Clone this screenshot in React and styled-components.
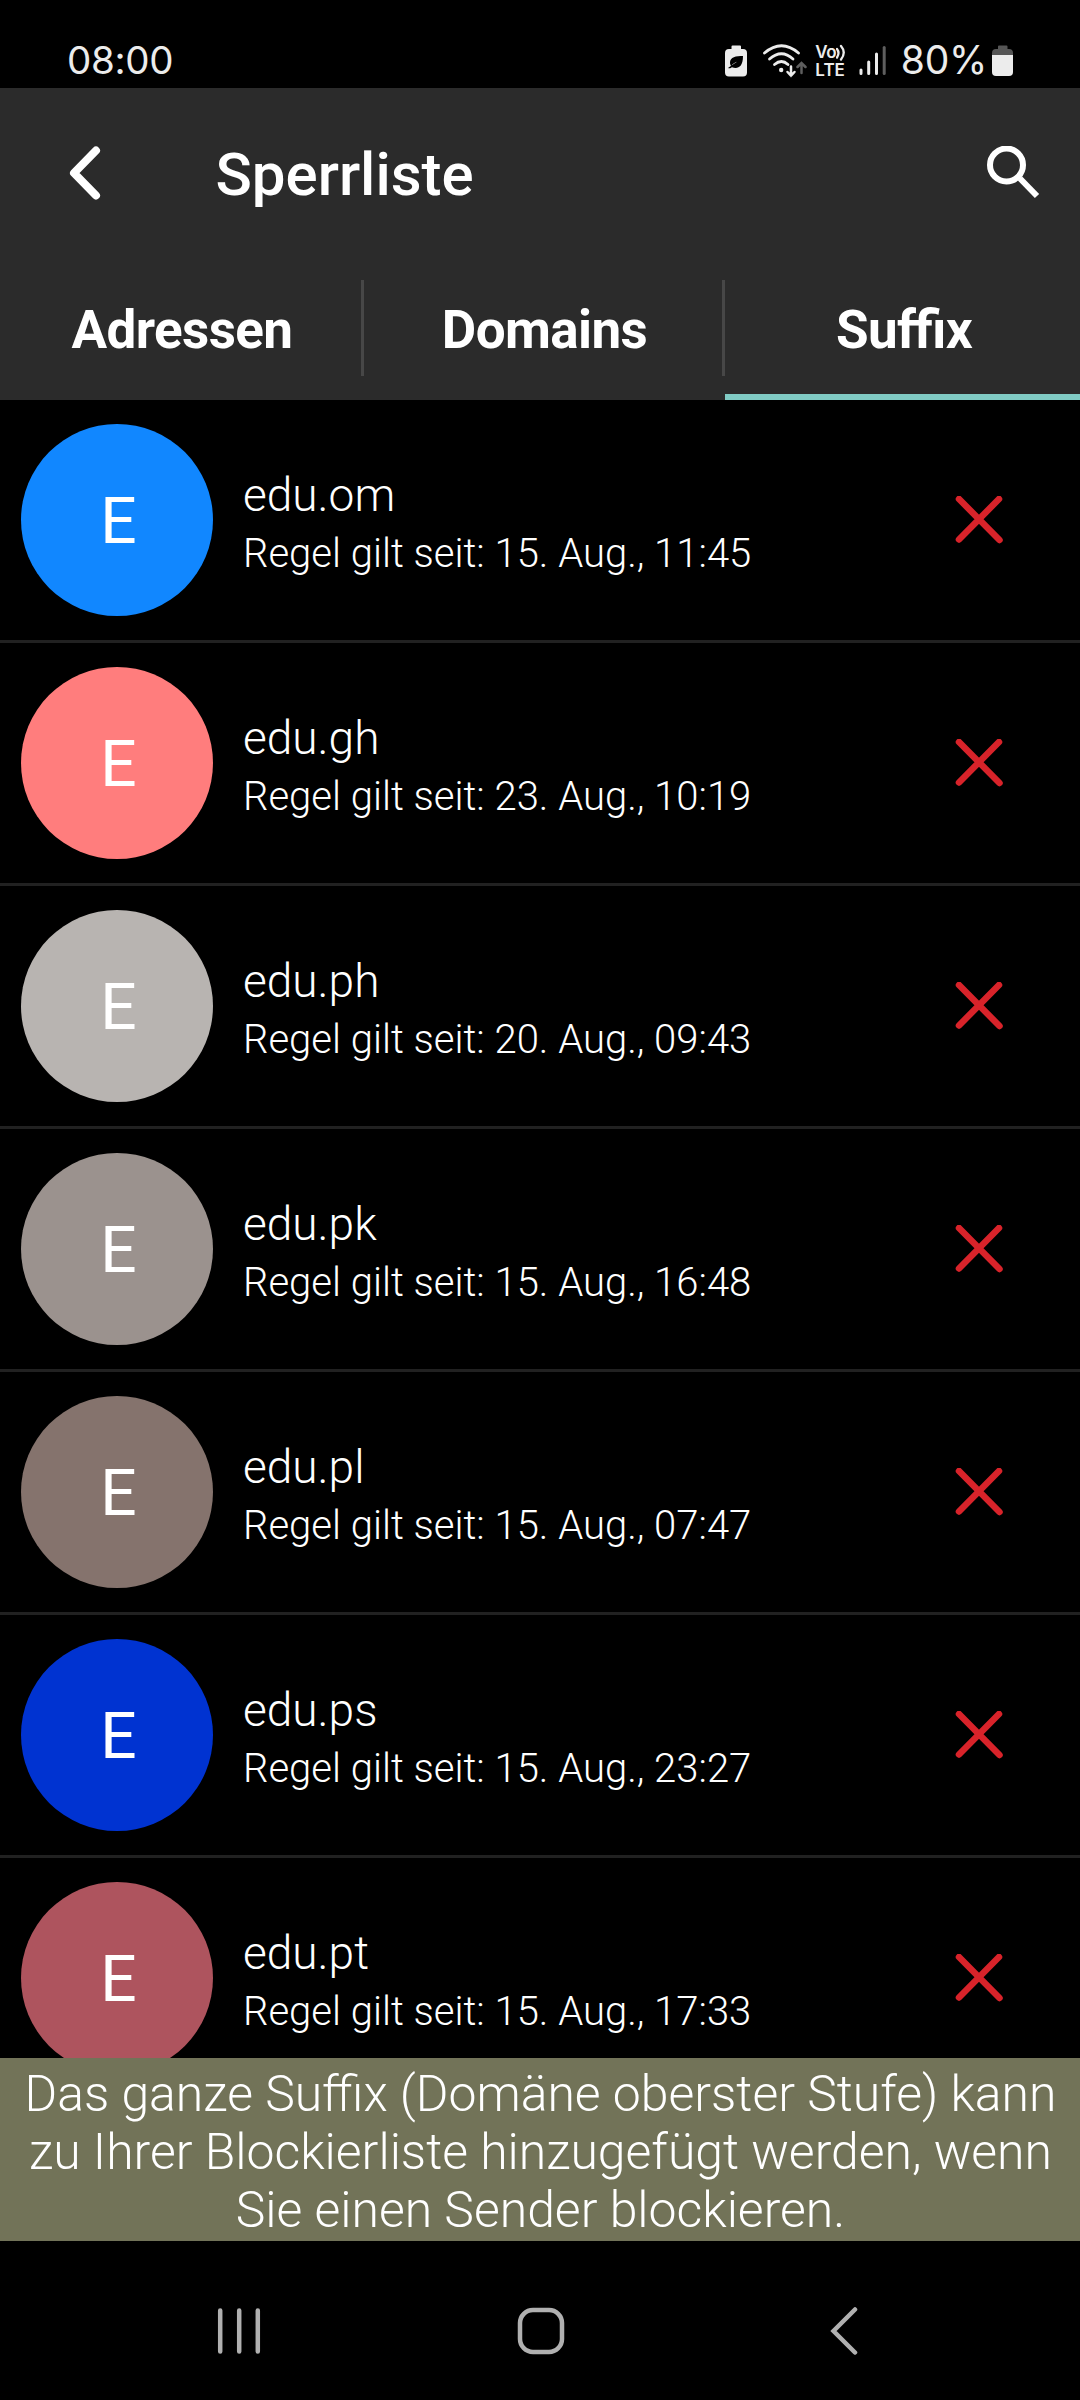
import React from 'react';
import styled, { createGlobalStyle } from 'styled-components';

const rules = [
  { name: 'edu.om', since: '15. Aug., 11:45', color: '#1187ff' },
  { name: 'edu.gh', since: '23. Aug., 10:19', color: '#ff7d7d' },
  { name: 'edu.ph', since: '20. Aug., 09:43', color: '#b8b4b1' },
  { name: 'edu.pk', since: '15. Aug., 16:48', color: '#9b928e' },
  { name: 'edu.pl', since: '15. Aug., 07:47', color: '#85736d' },
  { name: 'edu.ps', since: '15. Aug., 23:27', color: '#0033d1' },
  { name: 'edu.pt', since: '15. Aug., 17:33', color: '#ae545e' },
];

const GlobalStyle = createGlobalStyle`
  * {
    box-sizing: border-box;
  }
  body {
    margin: 0;
    background: #000;
  }
  svg {
    display: block;
    flex: none;
  }
`;

const Screen = styled.div`
  width: 1080px;
  height: 2400px;
  display: flex;
  flex-direction: column;
  overflow: hidden;
  background: #000;
  color: #fff;
  font-family: Roboto, 'Liberation Sans', sans-serif;
`;

const StatusBar = styled.div`
  flex: none;
  height: 88px;
  padding: 40px 67px 0 67px;
  display: flex;
  justify-content: space-between;
  color: #ececec;
  font-family: Inter, 'Liberation Sans', sans-serif;
`;

const Clock = styled.span`
  font-size: 38.5px;
  line-height: 40px;
  letter-spacing: -0.3px;
`;

const BatteryLevel = styled.span`
  margin-right: 5px;
  font-size: 39px;
  line-height: 40px;
  letter-spacing: -0.3px;
`;

const StatusIcons = styled.div`
  display: flex;
  height: 40px;
`;

const StatusIcon = styled.svg`
  height: 40px;
  margin-right: ${({ $gap }) => $gap}px;
`;

const VoLte = styled.div`
  width: 32px;
  margin-right: 11.5px;
  padding-top: 4px;
  font-size: 17px;
  font-weight: 600;
  line-height: 17.5px;
`;

const VoLine = styled.div`
  display: flex;
  letter-spacing: -0.5px;
`;

const Header = styled.header`
  flex: none;
  height: 312px;
  background: #2b2b2b;
`;

const Toolbar = styled.div`
  height: 192px;
  padding: 0 40px 22px 68px;
  display: flex;
  align-items: center;
`;

const Title = styled.h1`
  flex: 1;
  margin: 4px 0 0 113.5px;
  font-size: 60px;
  font-weight: 500;
  line-height: 70px;
`;

const Tabs = styled.nav`
  height: 120px;
  display: grid;
  grid-template-columns: 364px 361px 355px;
`;

const Tab = styled.div`
  display: flex;
  flex-direction: column;
  border-bottom: 6px solid ${({ $active }) => ($active ? '#80cbc4' : 'transparent')};
`;

const TabLabel = styled.div`
  height: 96px;
  padding-left: 3px;
  border-right: ${({ $divider }) => ($divider ? '3px solid #474747' : 'none')};
  font-size: 53px;
  font-weight: 700;
  font-feature-settings: 'liga';
  letter-spacing: -0.6px;
  line-height: 100px;
  text-align: center;
`;

const List = styled.ul`
  flex: 1;
  min-height: 0;
  margin: 0;
  padding: 0;
  overflow: hidden;
  list-style: none;
`;

const Row = styled.li`
  height: 243px;
  padding: 0 77px 0 21px;
  display: flex;
  align-items: center;
  border-bottom: 3px solid #212121;
`;

const Avatar = styled.div`
  flex: none;
  width: 192px;
  height: 192px;
  padding-left: 3px;
  border-radius: 50%;
  background: ${({ $color }) => $color};
  font-size: 64px;
  line-height: 195px;
  text-align: center;
`;

const RowText = styled.div`
  flex: 1;
  margin: 8px 0 0 30px;
  font-weight: 300;
`;

const Name = styled.div`
  font-size: 46px;
  line-height: 59px;
`;

const Since = styled.div`
  font-size: 40px;
  line-height: 58px;
`;

const Hint = styled.p`
  flex: none;
  height: 183px;
  margin: 0;
  padding: 7px 0 0 1px;
  background: #727358;
  font-size: 49.9px;
  font-weight: 300;
  line-height: 58px;
  text-align: center;
`;

const NavBar = styled.footer`
  flex: none;
  height: 159px;
  padding: 21px 222px 0 217px;
  display: flex;
  align-items: center;
  justify-content: space-between;
`;

const HomeIcon = styled.svg`
  margin-right: 9px;
`;

const BatterySaverIcon = () => (
  <StatusIcon width="22" viewBox="725 40 22 40" $gap={14}>
    <path
      d="M732.5 45.5h7.500a1 1 0 0 1 1 1V49h2a4 4 0 0 1 4 4v19.500a4 4 0 0 1-4 4h-14a4 4 0 0 1-4-4V53a4 4 0 0 1 4-4h2.500v-2.500a1 1 0 0 1 1-1z"
      fill="#ececec"
    />
    <path
      d="M743 56c-7 0-13 1-13 6.500 0 1.500.5 2.800 1 3.500 2-2.500 4-3.500 6-4.200-3 2-6 4.200-9 6.200 2 .5 3-.2 4-.8 5 1.800 11 .8 11-11.200z"
      fill="#000"
    />
  </StatusIcon>
);

const WifiIcon = () => (
  <StatusIcon width="46" viewBox="761 40 46 40" $gap={8} fill="none" strokeLinecap="round">
    <g stroke="#ececec" strokeWidth="2.8">
      <path d="M764.5 53q17-14.500 34 0" />
      <path d="M769.5 59q12-10.500 23.500 0" />
      <path d="M774.5 64.500q7-6 13.500 0" />
      <path d="M791 66.500v9M787.500 72l3.500 3.700 3.500-3.700" strokeWidth="2.5" />
    </g>
    <circle cx="781.2" cy="70" r="2.2" fill="#ececec" />
    <path d="M801.5 73V63.500M797.500 67l4-4 4 4" stroke="#5e5e5e" strokeWidth="2.5" />
  </StatusIcon>
);

const WavesIcon = () => (
  <svg width="11" height="17" viewBox="0 0 11 17" fill="none" stroke="#ececec" strokeWidth="2.3" strokeLinecap="round">
    <path d="M1 5q3 4 0 8.500M5 2q5.500 6.500 0 13.500" />
  </svg>
);

const SignalIcon = () => (
  <StatusIcon width="28" viewBox="859 40 28 40" $gap={14} strokeWidth="3" strokeLinecap="round" stroke="#ececec">
    <path d="M861 70v3.500M868.700 62v11.500M876.500 54v19.500" />
    <path d="M884.2 47.500v26" stroke="#5e5e5e" />
  </StatusIcon>
);

const BatteryIcon = () => (
  <StatusIcon width="21" viewBox="992 40 21 40" $gap={0}>
    <path d="M992 55v-2a4 4 0 0 1 4-4h2v-2.500a1 1 0 0 1 1-1h7.500a1 1 0 0 1 1 1V49h1.500a4 4 0 0 1 4 4v2z" fill="#555" />
    <path d="M992 55h21v17a4 4 0 0 1-4 4h-13a4 4 0 0 1-4-4z" fill="#ececec" />
  </StatusIcon>
);

const BackIcon = () => (
  <svg
    width="34"
    height="56"
    viewBox="0 0 34 56"
    fill="none"
    stroke="#fff"
    strokeWidth="8"
    strokeLinecap="round"
    strokeLinejoin="round"
  >
    <path d="M28 5.500L6 28l22 22.500" />
  </svg>
);

const SearchIcon = () => (
  <svg width="54" height="54" viewBox="0 2 54 54" fill="none" stroke="#fff">
    <circle cx="20.5" cy="21" r="16.5" strokeWidth="6" />
    <path d="M34 34.500L51 52" strokeWidth="6" />
    <path d="M32 32l3 3" strokeWidth="3" />
  </svg>
);

const DeleteIcon = () => (
  <svg width="48" height="48" viewBox="0 1 48 48" fill="none" stroke="#d8232a" strokeWidth="6.5" strokeLinecap="round">
    <path d="M4 4l40.500 41M44 4L4 44.500" />
  </svg>
);

const App = () => {
  return (
    <Screen>
      <GlobalStyle />
      <StatusBar>
        <Clock>08:00</Clock>
        <StatusIcons>
          <BatterySaverIcon />
          <WifiIcon />
          <VoLte>
            <VoLine>
              Vo
              <WavesIcon />
            </VoLine>
            <div>LTE</div>
          </VoLte>
          <SignalIcon />
          <BatteryLevel>80%</BatteryLevel>
          <BatteryIcon />
        </StatusIcons>
      </StatusBar>

      <Header>
        <Toolbar>
          <BackIcon />
          <Title>Sperrliste</Title>
          <SearchIcon />
        </Toolbar>
        <Tabs>
          <Tab>
            <TabLabel $divider>Adressen</TabLabel>
          </Tab>
          <Tab>
            <TabLabel $divider>Domains</TabLabel>
          </Tab>
          <Tab $active>
            <TabLabel>Suffix</TabLabel>
          </Tab>
        </Tabs>
      </Header>

      <List>
        {rules.map((rule) => (
          <Row key={rule.name}>
            <Avatar $color={rule.color}>E</Avatar>
            <RowText>
              <Name>{rule.name}</Name>
              <Since>Regel gilt seit: {rule.since}</Since>
            </RowText>
            <DeleteIcon />
          </Row>
        ))}
      </List>

      <Hint>
        Das ganze Suffix (Domäne oberster Stufe) kann
        <br />
        zu Ihrer Blockierliste hinzugefügt werden, wenn
        <br />
        Sie einen Sender blockieren.
      </Hint>

      <NavBar>
        <svg width="44" height="50" viewBox="0 0 44 50" stroke="#b0b0b0" strokeWidth="4.5" strokeLinecap="round">
          <path d="M3.2 4.500v41M22.200 4.500v41M40.800 4.500v41" />
        </svg>
        <HomeIcon width="48" height="48" viewBox="0 0 48 48">
          <rect x="3" y="3" width="42" height="42" rx="13" fill="none" stroke="#b0b0b0" strokeWidth="4.5" />
        </HomeIcon>
        <svg width="28" height="50" viewBox="0 0 28 50" fill="none" stroke="#b0b0b0" strokeWidth="4.5" strokeLinecap="round">
          <path d="M25 3.500L3.500 25 25 46.500" />
        </svg>
      </NavBar>
    </Screen>
  );
};

export default App;
